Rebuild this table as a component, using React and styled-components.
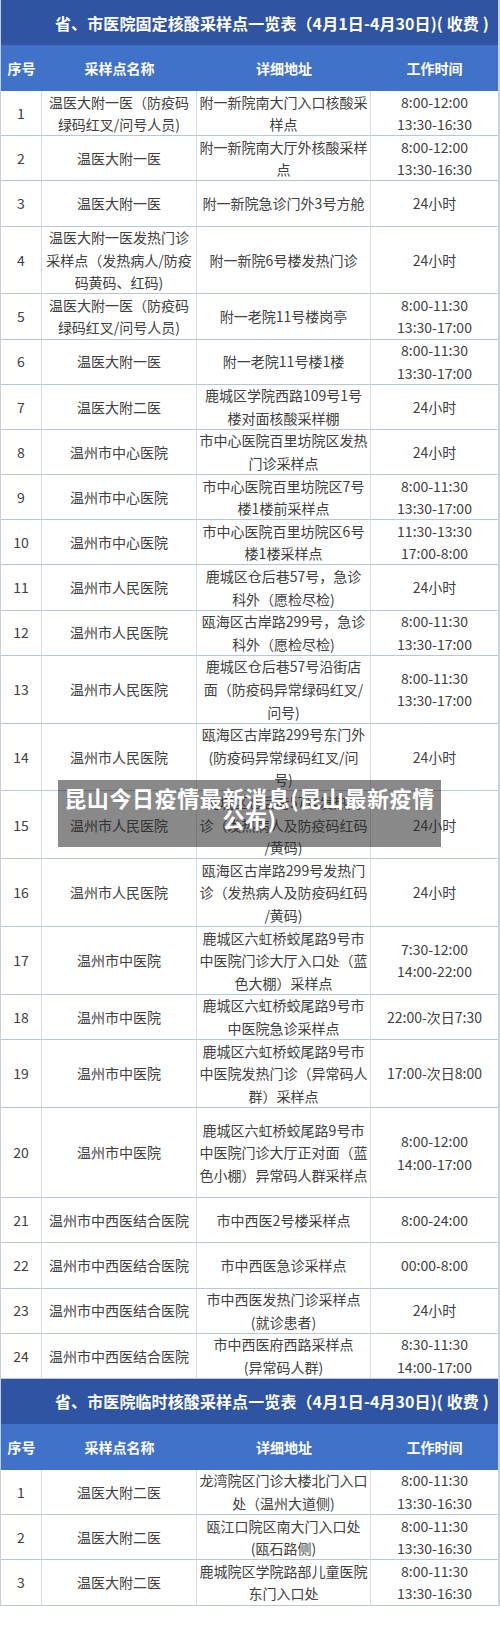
import styled, { createGlobalStyle } from "styled-components";

const GlobalStyle = createGlobalStyle`
  body {
    margin: 0;
    background: #ffffff;
    font-family: "Noto Sans CJK SC", "Noto Sans", sans-serif;
  }
`;

const LINE = 22.6;

const Page = styled.div`
  position: relative;
  width: 500px;
  box-sizing: border-box;
  border-left: 1px solid #c3cede;
  border-right: 2px solid #c9d3e0;
  background: #ffffff;
`;

const TitleBar = styled.div`
  height: 45px;
  display: flex;
  align-items: center;
  padding-left: 54px;
  background: #2e54a3;
  color: #ffffff;
  font-size: 16px;
  font-weight: 700;
  white-space: nowrap;
  letter-spacing: 0.1px;
`;

const Grid = styled.div`
  display: grid;
  grid-template-columns: 41px 155px 174px 1fr;
`;

const HeadCell = styled.div`
  height: 46px;
  display: flex;
  align-items: center;
  justify-content: center;
  background: #3f72c8;
  color: #ffffff;
  font-size: 14px;
  font-weight: 700;
`;

const Cell = styled.div`
  box-sizing: border-box;
  height: ${(p) => p.$lines * LINE}px;
  display: flex;
  align-items: center;
  justify-content: center;
  text-align: center;
  white-space: pre;
  font-size: 14px;
  line-height: ${LINE}px;
  color: #404040;
  border-bottom: 1px solid #b9c6d8;
  border-right: ${(p) => (p.$last ? "none" : "1px solid #d3dbe6")};
`;

const Overlay = styled.div`
  position: absolute;
  left: 57px;
  top: 780px;
  width: 383px;
  height: 67px;
  box-sizing: border-box;
  padding: 7px 0 0;
  background: rgba(40, 40, 40, 0.55);
  color: #ffffff;
  font-size: 22px;
  font-weight: 700;
  line-height: 21px;
  letter-spacing: 0.6px;
  text-align: center;
  white-space: pre;
`;

const heads = ["序号", "采样点名称", "详细地址", "工作时间"];

const fixedRows = [
  ["1", "温医大附一医（防疫码\n绿码红叉/问号人员)", "附一新院南大门入口核酸采\n样点", "8:00-12:00\n13:30-16:30"],
  ["2", "温医大附一医", "附一新院南大厅外核酸采样\n点", "8:00-12:00\n13:30-16:30"],
  ["3", "温医大附一医", "附一新院急诊门外3号方舱", "24小时"],
  ["4", "温医大附一医发热门诊\n采样点（发热病人/防疫\n码黄码、红码)", "附一新院6号楼发热门诊", "24小时"],
  ["5", "温医大附一医（防疫码\n绿码红叉/问号人员)", "附一老院11号楼岗亭", "8:00-11:30\n13:30-17:00"],
  ["6", "温医大附一医", "附一老院11号楼1楼", "8:00-11:30\n13:30-17:00"],
  ["7", "温医大附二医", "鹿城区学院西路109号1号\n楼对面核酸采样棚", "24小时"],
  ["8", "温州市中心医院", "市中心医院百里坊院区发热\n门诊采样点", "24小时"],
  ["9", "温州市中心医院", "市中心医院百里坊院区7号\n楼1楼前采样点", "8:00-11:30\n13:30-17:00"],
  ["10", "温州市中心医院", "市中心医院百里坊院区6号\n楼1楼采样点", "11:30-13:30\n17:00-8:00"],
  ["11", "温州市人民医院", "鹿城区仓后巷57号，急诊\n科外（愿检尽检)", "24小时"],
  ["12", "温州市人民医院", "瓯海区古岸路299号，急诊\n科外（愿检尽检)", "8:00-11:30\n13:30-17:00"],
  ["13", "温州市人民医院", "鹿城区仓后巷57号沿街店\n面（防疫码异常绿码红叉/\n问号)", "8:00-11:30\n13:30-17:00"],
  ["14", "温州市人民医院", "瓯海区古岸路299号东门外\n(防疫码异常绿码红叉/问\n号)", "24小时"],
  ["15", "温州市人民医院", "鹿城区仓后巷57号发热门\n诊（发热病人及防疫码红码\n/黄码)", "24小时"],
  ["16", "温州市人民医院", "瓯海区古岸路299号发热门\n诊（发热病人及防疫码红码\n/黄码)", "24小时"],
  ["17", "温州市中医院", "鹿城区六虹桥蛟尾路9号市\n中医院门诊大厅入口处（蓝\n色大棚）采样点", "7:30-12:00\n14:00-22:00"],
  ["18", "温州市中医院", "鹿城区六虹桥蛟尾路9号市\n中医院急诊采样点", "22:00-次日7:30"],
  ["19", "温州市中医院", "鹿城区六虹桥蛟尾路9号市\n中医院发热门诊（异常码人\n群）采样点", "17:00-次日8:00"],
  ["20", "温州市中医院", "鹿城区六虹桥蛟尾路9号市\n中医院门诊大厅正对面（蓝\n色小棚）异常码人群采样点", "8:00-12:00\n14:00-17:00", 4],
  ["21", "温州市中西医结合医院", "市中西医2号楼采样点", "8:00-24:00"],
  ["22", "温州市中西医结合医院", "市中西医急诊采样点", "00:00-8:00"],
  ["23", "温州市中西医结合医院", "市中西医发热门诊采样点\n(就诊患者)", "24小时"],
  ["24", "温州市中西医结合医院", "市中西医府西路采样点\n(异常码人群)", "8:30-11:30\n14:00-17:00"],
];

const tempRows = [
  ["1", "温医大附二医", "龙湾院区门诊大楼北门入口\n处（温州大道侧)", "8:00-11:30\n13:30-16:30"],
  ["2", "温医大附二医", "瓯江口院区南大门入口处\n(瓯石路侧)", "8:00-11:30\n13:30-16:30"],
  ["3", "温医大附二医", "鹿城院区学院路部儿童医院\n东门入口处", "8:00-11:30\n13:30-16:30"],
];

function SampleTable({ title, rows }) {
  return (
    <>
      <TitleBar>{title}</TitleBar>
      <Grid>
        {heads.map((h) => (
          <HeadCell key={h}>{h}</HeadCell>
        ))}
        {rows.map((row) => {
          const cells = row.slice(0, 4);
          const lines = Math.max(2, row[4] || 0, ...cells.map((c) => c.split("\n").length));
          return cells.map((c, i) => (
            <Cell key={row[0] + "-" + i} $lines={lines} $last={i === 3}>
              {c}
            </Cell>
          ));
        })}
      </Grid>
    </>
  );
}

export default function App() {
  return (
    <Page>
      <GlobalStyle />
      <SampleTable
        title="省、市医院固定核酸采样点一览表（4月1日-4月30日)( 收费 )"
        rows={fixedRows}
      />
      <SampleTable
        title="省、市医院临时核酸采样点一览表（4月1日-4月30日)( 收费 )"
        rows={tempRows}
      />
      <Overlay>{"昆山今日疫情最新消息(昆山最新疫情\n公布)"}</Overlay>
    </Page>
  );
}
